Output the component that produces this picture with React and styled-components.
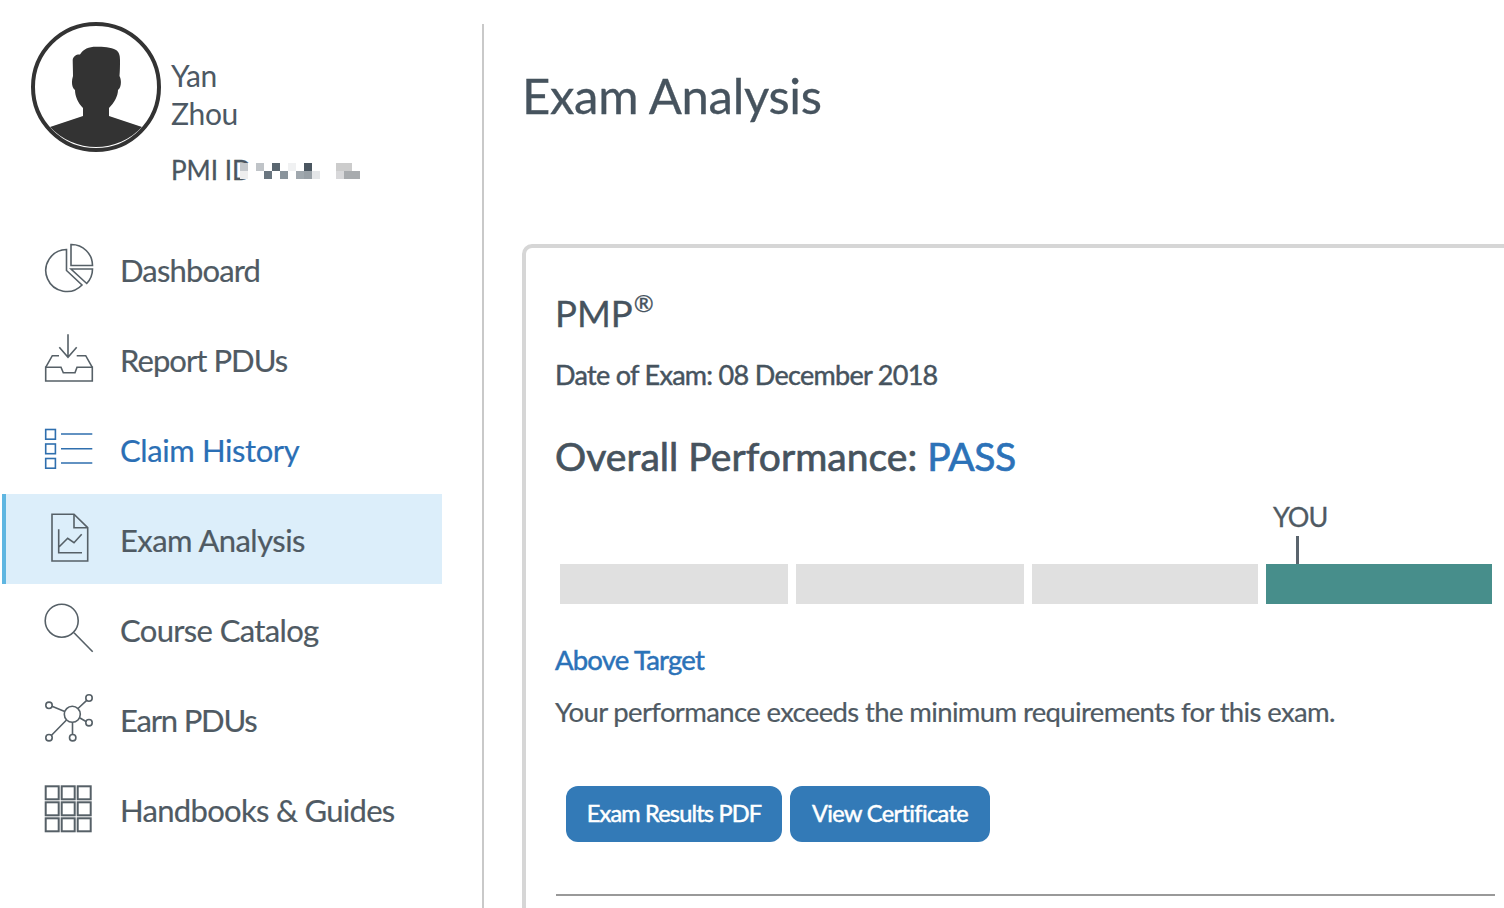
import React from "react";
import styled, { createGlobalStyle } from "styled-components";

const Global = createGlobalStyle`
  html, body { margin: 0; padding: 0; background: #fff; }
  body { font-family: "Lato", "Open Sans", sans-serif; color: #4a5660; }
`;

const Page = styled.div`
  display: flex;
  height: 908px;
  overflow: hidden;
`;
const Sidebar = styled.aside`
  flex: 0 0 484px;
  box-sizing: border-box;
  margin-top: 24px;
  padding-left: 2px;
  border-right: 2px solid #c9c9c9;
`;
const Profile = styled.div`
  margin: -2px 0 36px 29px;
`;
const ProfileTop = styled.div`
  display: flex;
  gap: 10px;
`;
const Avatar = styled.svg`
  flex: none;
  width: 130px;
  height: 130px;
  display: block;
`;
const Names = styled.div`
  padding-top: 34px;
  font-size: 30px;
  line-height: 38px;
  letter-spacing: -0.4px;
  color: #4d5964;
`;
const IdRow = styled.div`
  position: relative;
  margin-left: 140px;
  height: 36px;
  line-height: 36px;
  font-size: 26px;
  -webkit-text-stroke: 0.3px #4a5660;
  color: #4a5660;
`;
const Redaction = styled.svg`
  position: absolute;
  left: 69px;
  top: 11px;
  width: 122px;
  height: 16px;
`;
const Nav = styled.nav`
  display: flex;
  flex-direction: column;
`;
const NavItem = styled.a`
  box-sizing: border-box;
  width: 440px;
  height: 90px;
  display: flex;
  align-items: center;
  gap: 21px;
  padding: 4px 0 0 33px;
  border-left: 4px solid ${(p) => (p.$active ? "#5fb6e1" : "transparent")};
  background: ${(p) => (p.$active ? "#dceefa" : "transparent")};
  color: ${(p) => (p.$link ? "#2b6fb5" : "#4f5a63")};
  font-size: 31px;
  -webkit-text-stroke: 0.2px ${(p) => (p.$link ? "#2b6fb5" : "#4f5a63")};
`;
const NavLabel = styled.span`
  position: relative;
  top: -1px;
  letter-spacing: ${(p) => p.$track}px;
`;
const NavIcon = styled.svg`
  flex: none;
  width: 60px;
  height: 60px;
  fill: none;
  stroke: ${(p) => (p.$link ? "#2f6fae" : "#566067")};
  stroke-width: ${(p) => p.$weight || 1.6}px;
`;
const Main = styled.main`
  flex: 1;
  min-width: 0;
  padding: 65px 0 0 38px;
`;
const Title = styled.h1`
  margin: 0 0 119px 0;
  font-size: 49px;
  line-height: 60px;
  font-weight: 400;
  letter-spacing: -0.3px;
  -webkit-text-stroke: 0.3px #46535e;
  color: #46535e;
`;
const Card = styled.section`
  box-sizing: border-box;
  margin-right: -40px;
  padding: 43px 45px 40px 29px;
  border: 4px solid #d6d6d6;
  border-radius: 10px;
`;
const ExamName = styled.h2`
  margin: 0;
  font-size: 36.5px;
  line-height: 44px;
  font-weight: 400;
  -webkit-text-stroke: 0.3px #46535e;
  color: #46535e;
  sup {
    margin-left: 1px;
    font-size: 24px;
    line-height: 0;
    vertical-align: 15px;
  }
`;
const ExamDate = styled.p`
  margin: 22px 0 0;
  font-size: 27px;
  line-height: 36px;
  letter-spacing: -0.7px;
  -webkit-text-stroke: 0.45px #46535e;
  color: #46535e;
`;
const Overall = styled.h3`
  margin: 38px 0 0;
  font-size: 39px;
  line-height: 50px;
  font-weight: 400;
  letter-spacing: 0.05px;
  -webkit-text-stroke: 0.7px #46535e;
  color: #46535e;
  span {
    letter-spacing: -0.5px;
    color: #2c72b8;
    -webkit-text-stroke-color: #2c72b8;
  }
`;
const Meter = styled.div`
  position: relative;
  margin: 19px 3px 0 5px;
  padding-top: 64px;
  display: flex;
  gap: 8px;
`;
const Segment = styled.div`
  flex: 0 0 ${(p) => p.$w}px;
  height: 40px;
  background: ${(p) => (p.$on ? "#478e8b" : "#e0e0e0")};
`;
const You = styled.div`
  position: absolute;
  left: 713px;
  top: 0;
  font-size: 27px;
  line-height: 34px;
  letter-spacing: -1px;
  -webkit-text-stroke: 0.3px #4f5a63;
  color: #4f5a63;
`;
const Tick = styled.div`
  position: absolute;
  left: 736px;
  top: 36px;
  width: 3px;
  height: 28px;
  background: #5a646d;
`;
const Status = styled.h4`
  margin: 38px 0 0;
  font-size: 27.5px;
  line-height: 36px;
  font-weight: 400;
  letter-spacing: -0.8px;
  -webkit-text-stroke: 0.5px #2b72b8;
  color: #2b72b8;
`;
const Description = styled.p`
  margin: 16px 0 0;
  font-size: 27.5px;
  line-height: 36px;
  letter-spacing: -0.64px;
  -webkit-text-stroke: 0.2px #4f5a63;
  color: #4f5a63;
`;
const Buttons = styled.div`
  display: flex;
  gap: 8px;
  margin: 56px 0 0 11px;
`;
const Button = styled.button`
  height: 56px;
  width: ${(p) => p.$w}px;
  padding: 0 0 2px;
  border: 0;
  border-radius: 12px;
  background: #337ab7;
  color: #fff;
  font: 400 23.5px "Lato", sans-serif;
  letter-spacing: ${(p) => p.$track}px;
  -webkit-text-stroke: 0.5px #fff;
`;
const Rule = styled.hr`
  margin: 52px 0 0 1px;
  border: 0;
  height: 2px;
  background: #999;
`;

const cells = [
  [0, 0, "#c4c8cc"], [16, 0, "#c0c4c8"], [32, 0, "#5a6670"], [48, 0, "#f0f1f2"], [64, 0, "#4a5660"], [96, 0, "#ccc"], [104, 0, "#ccc"],
  [0, 8, "#eee"], [24, 8, "#6a7680"], [40, 8, "#8a949c"], [56, 8, "#a0a8ae"], [64, 8, "#98a0a6"], [72, 8, "#e4e6e8"], [96, 8, "#d8d8da"], [104, 8, "#a8abae"], [112, 8, "#a8abae"],
];

const items = [
  { label: "Dashboard", track: -0.85, icon: (
    <>
      <path d="M27.5 8.5A21 21 0 1 0 43 44L27.5 29.5Z" />
      <path d="M32 3.5A21 21 0 0 1 53.5 24.5H32Z" />
      <path d="M32 28H53.5A21 21 0 0 1 47.7 42.5Z" />
    </>
  ) },
  { label: "Report PDUs", track: -0.95, icon: (
    <>
      <path d="M29 3.3V26.3M20.3 16.3L29 26.3L37.7 16.3" />
      <path d="M6.7 36.3V50H53.3V36.3H38L36 41.7H24.3L22 36.3Z" />
      <path d="M6.7 36.3L13.3 24.7H20M53.3 36.3L46.7 24.7H37.7" />
    </>
  ) },
  { label: "Claim History", track: -0.4, link: true, icon: (
    <>
      <rect x="6.7" y="8.5" width="9.7" height="9.7" />
      <rect x="6.7" y="23" width="9.7" height="9.7" />
      <rect x="6.7" y="37.5" width="9.7" height="9.7" />
      <path d="M22 13H53.3M22 27.7H53.3M22 42H53.3" />
    </>
  ) },
  { label: "Exam Analysis", track: -0.55, active: true, icon: (
    <>
      <path d="M13 3.3H35L48.7 16.7V50H13Z" />
      <path d="M35 3.3V16.7H48.7" />
      <path d="M19.7 18.3V41.7H43M19.7 36.3L28.7 27.3L35 31.7L42.7 23.3" />
    </>
  ) },
  { label: "Course Catalog", track: -0.65, icon: (
    <>
      <circle cx="22.7" cy="19.7" r="16.5" />
      <path d="M35 31.7L53.7 50.7" />
    </>
  ) },
  { label: "Earn PDUs", track: -1.2, icon: (
    <>
      <circle cx="33.3" cy="23.3" r="8" />
      <circle cx="10" cy="14.3" r="3.2" />
      <circle cx="50" cy="7" r="3.2" />
      <circle cx="50" cy="31.7" r="3.2" />
      <circle cx="10" cy="46.7" r="3.2" />
      <circle cx="33.7" cy="46.7" r="3.2" />
      <path d="M13 15.3L25.7 20.5M47.7 9.3L39 17.5M47 30.5L41 27M12.3 44.5L27.5 29M33.5 43.5V31.3" />
    </>
  ) },
  { label: "Handbooks & Guides", track: -0.7, weight: 2, icon: (
    <>
      {[5.3, 21.3, 37.3].map((y) =>
        [6.7, 22.7, 38.7].map((x) => <rect key={`${x}-${y}`} x={x} y={y} width="13" height="13" />)
      )}
    </>
  ) },
];

export default function App() {
  return (
    <>
      <Global />
      <Page>
        <Sidebar>
          <Profile>
            <ProfileTop>
              <Avatar viewBox="0 0 130 130">
                <circle cx="65" cy="65" r="63" fill="#fff" stroke="#333" strokeWidth="4" />
                <path
                  fill="#333"
                  d="M52 94V86C47 81 44 74 44 68C41 66 40 60 42 54C42 48 41.7 42 41.7 38C42 34 46 32 49 32.5C52 27 58 24.7 65 24.7C72 24.7 80 25 85 28C88 30 89 33 89 38C89 44 89 48 88.5 54C91 59 90 66 87 68C87 74 83 81 78 86V94L111 105A63 63 0 0 1 19 105Z"
                />
              </Avatar>
              <Names>Yan<br />Zhou</Names>
            </ProfileTop>
            <IdRow>
              PMI ID
              <Redaction viewBox="0 0 122 16">
                <rect x="0" y="0" width="122" height="16" fill="#fff" />
                {cells.map(([x, y, c]) => <rect key={`${x}-${y}`} x={x} y={y} width="8" height="8" fill={c} />)}
              </Redaction>
            </IdRow>
          </Profile>
          <Nav>
            {items.map((it) => (
              <NavItem key={it.label} $active={it.active} $link={it.link}>
                <NavIcon viewBox="0 0 60 60" $link={it.link} $weight={it.weight}>{it.icon}</NavIcon>
                <NavLabel $track={it.track}>{it.label}</NavLabel>
              </NavItem>
            ))}
          </Nav>
        </Sidebar>
        <Main>
          <Title>Exam Analysis</Title>
          <Card>
            <ExamName>PMP<sup>®</sup></ExamName>
            <ExamDate>Date of Exam: 08 December 2018</ExamDate>
            <Overall>Overall Performance: <span>PASS</span></Overall>
            <Meter>
              <You>YOU</You>
              <Tick />
              <Segment $w={228} /><Segment $w={228} /><Segment $w={226} /><Segment $w={226} $on />
            </Meter>
            <Status>Above Target</Status>
            <Description>Your performance exceeds the minimum requirements for this exam.</Description>
            <Buttons>
              <Button $w={216} $track={-0.8}>Exam Results PDF</Button>
              <Button $w={200} $track={-0.6}>View Certificate</Button>
            </Buttons>
            <Rule />
          </Card>
        </Main>
      </Page>
    </>
  );
}
